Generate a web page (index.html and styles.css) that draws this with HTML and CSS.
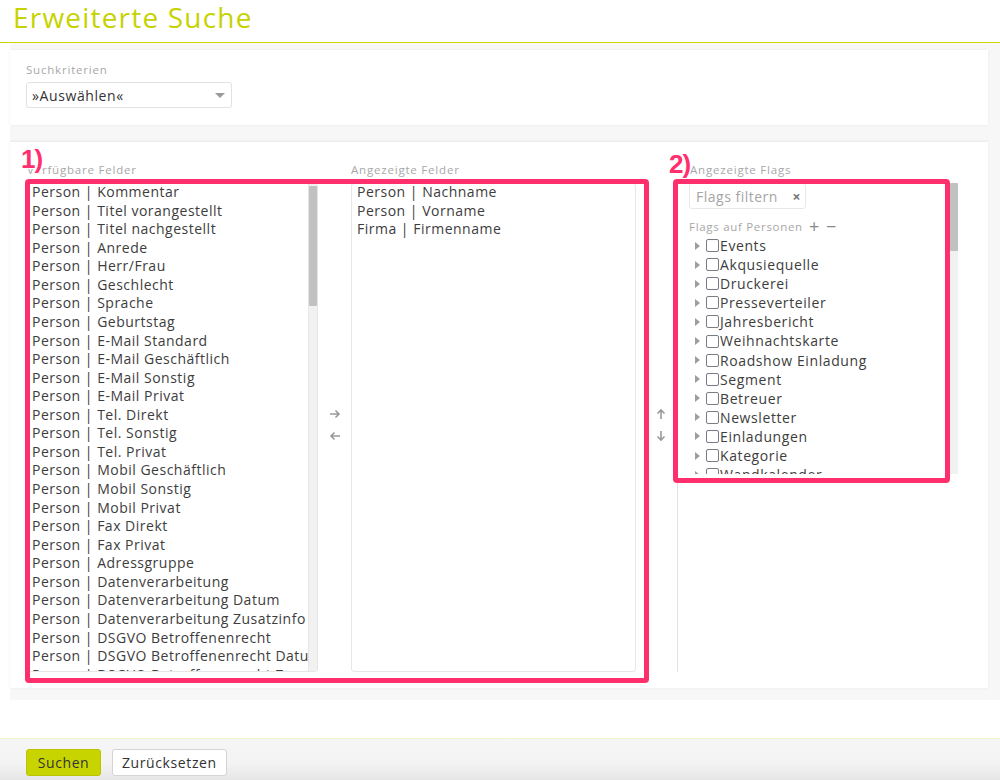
FILE: index.html
```html
<!DOCTYPE html>
<html>
<head>
  <meta charset="UTF-8">
  <meta name="viewport" content="width=device-width, initial-scale=1.0">
  <title>Erweiterte Suche</title>
  <link rel="stylesheet" href="styles.css">
</head>
<body>
  <header class="page-head">
    <h1 class="page-title">Erweiterte Suche</h1>
  </header>

  <main class="content">
    <section class="card criteria">
      <div class="field-label">Suchkriterien</div>
      <div class="select">
        <span>»Auswählen«</span>
        <span class="caret"></span>
      </div>
    </section>

    <section class="card fields">
      <div class="col col-available">
        <div class="field-label">Verfügbare Felder</div>
        <div class="listbox">
          <ul class="list">
            <li>Person | Kommentar</li>
            <li>Person | Titel vorangestellt</li>
            <li>Person | Titel nachgestellt</li>
            <li>Person | Anrede</li>
            <li>Person | Herr/Frau</li>
            <li>Person | Geschlecht</li>
            <li>Person | Sprache</li>
            <li>Person | Geburtstag</li>
            <li>Person | E-Mail Standard</li>
            <li>Person | E-Mail Geschäftlich</li>
            <li>Person | E-Mail Sonstig</li>
            <li>Person | E-Mail Privat</li>
            <li>Person | Tel. Direkt</li>
            <li>Person | Tel. Sonstig</li>
            <li>Person | Tel. Privat</li>
            <li>Person | Mobil Geschäftlich</li>
            <li>Person | Mobil Sonstig</li>
            <li>Person | Mobil Privat</li>
            <li>Person | Fax Direkt</li>
            <li>Person | Fax Privat</li>
            <li>Person | Adressgruppe</li>
            <li>Person | Datenverarbeitung</li>
            <li>Person | Datenverarbeitung Datum</li>
            <li>Person | Datenverarbeitung Zusatzinfo</li>
            <li>Person | DSGVO Betroffenenrecht</li>
            <li>Person | DSGVO Betroffenenrecht Datum</li>
            <li>Person | DSGVO Betroffenenrecht Zusatz</li>
          </ul>
          <div class="scrollbar"><div class="thumb thumb-list"></div></div>
        </div>
      </div>

      <div class="mover">
        <svg width="12" height="10" viewBox="0 0 12 10"><path d="M1 5h9M6.5 1.5 10 5l-3.5 3.5" fill="none" stroke="#9a9a9a" stroke-width="1.6"/></svg>
        <svg width="12" height="10" viewBox="0 0 12 10"><path d="M11 5H2M5.5 1.5 2 5l3.5 3.5" fill="none" stroke="#9a9a9a" stroke-width="1.6"/></svg>
      </div>

      <div class="col col-shown">
        <div class="field-label">Angezeigte Felder</div>
        <div class="listbox shown-box">
          <ul class="list">
            <li>Person | Nachname</li>
            <li>Person | Vorname</li>
            <li>Firma | Firmenname</li>
          </ul>
        </div>
      </div>

      <div class="mover mover-order">
        <svg width="10" height="12" viewBox="0 0 10 12"><path d="M5 11V2M1.5 5.5 5 2l3.5 3.5" fill="none" stroke="#9a9a9a" stroke-width="1.6"/></svg>
        <svg width="10" height="12" viewBox="0 0 10 12"><path d="M5 1v9M1.5 6.5 5 10l3.5-3.5" fill="none" stroke="#9a9a9a" stroke-width="1.6"/></svg>
      </div>

      <div class="col col-flags">
        <div class="field-label flags-label">Angezeigte Flags</div>
        <div class="flags-frame">
          <div class="flags-box">
            <div class="flags-inner">
              <div class="filter">
                <span>Flags filtern</span>
                <span class="clear">×</span>
              </div>
              <div class="tree-head">
                <span>Flags auf Personen</span>
                <span class="tree-tool">+</span>
                <span class="tree-tool">−</span>
              </div>
              <ul class="tree">
                <li><span class="toggle"></span><span class="check"></span>Events</li>
                <li><span class="toggle"></span><span class="check"></span>Akqusiequelle</li>
                <li><span class="toggle"></span><span class="check"></span>Druckerei</li>
                <li><span class="toggle"></span><span class="check"></span>Presseverteiler</li>
                <li><span class="toggle"></span><span class="check"></span>Jahresbericht</li>
                <li><span class="toggle"></span><span class="check"></span>Weihnachtskarte</li>
                <li><span class="toggle"></span><span class="check"></span>Roadshow Einladung</li>
                <li><span class="toggle"></span><span class="check"></span>Segment</li>
                <li><span class="toggle"></span><span class="check"></span>Betreuer</li>
                <li><span class="toggle"></span><span class="check"></span>Newsletter</li>
                <li><span class="toggle"></span><span class="check"></span>Einladungen</li>
                <li><span class="toggle"></span><span class="check"></span>Kategorie</li>
                <li><span class="toggle"></span><span class="check"></span>Wandkalender</li>
              </ul>
            </div>
            <div class="scrollbar"><div class="thumb thumb-flags"></div></div>
          </div>
        </div>
      </div>
    </section>
  </main>

  <div class="spacer"></div>

  <footer class="actions">
    <button class="btn btn-primary">Suchen</button>
    <button class="btn">Zurücksetzen</button>
  </footer>

  <!-- annotations drawn on top of the screenshot -->
  <div class="mark mark-1"></div>
  <div class="mark-num num-1">1)</div>
  <div class="mark mark-2"></div>
  <div class="mark-num num-2">2)</div>
</body>
</html>
```

FILE: styles.css
```css
body {
  margin: 0;
  font-family: "Open Sans", Arial, sans-serif;
  color: #3a3a3a;
  background-color: #ffffff;
  position: relative;
  height: 780px;
  overflow: hidden;
}

ul {
  list-style: none;
  margin: 0;
  padding: 0;
}

.page-head {
  height: 42px;
  border-bottom: 1px solid #cad800;
}

.page-title {
  margin: 0;
  padding: 0 0 0 13px;
  font-size: 28px;
  line-height: 34px;
  font-weight: 400;
  letter-spacing: 1.2px;
  color: #c6d300;
}

.content {
  margin-left: 10px;
  padding: 7px 12px 12px 0;
  background-color: #f7f7f7;
}

.card {
  background-color: #ffffff;
  box-shadow: 0 0 3px rgba(0, 0, 0, 0.06);
}

.criteria {
  height: 75px;
  box-sizing: border-box;
  padding: 13px 0 0 16px;
}

.field-label {
  font-size: 11.5px;
  line-height: 14px;
  color: #a8a8a8;
  letter-spacing: 0.8px;
}

.select {
  margin-top: 5px;
  width: 206px;
  height: 26px;
  box-sizing: border-box;
  border: 1px solid #e2e2e2;
  border-radius: 3px;
  display: flex;
  align-items: center;
  justify-content: space-between;
  padding: 0 6px 0 5px;
  font-size: 14px;
  letter-spacing: 0.6px;
  color: #333;
}

.caret {
  width: 0;
  height: 0;
  border-left: 5px solid transparent;
  border-right: 5px solid transparent;
  border-top: 5px solid #9a9a9a;
}

.fields {
  margin-top: 16px;
  height: 547px;
  box-sizing: border-box;
  padding: 21px 0 16px 17px;
  display: flex;
  border-top: 1px solid #ececec;
}

.col {
  display: flex;
  flex-direction: column;
}

.col .field-label {
  margin-bottom: 6px;
}

.col-available {
  width: 291px;
}

.col-shown {
  width: 285px;
}

.col-flags {
  width: 281px;
}

.listbox {
  flex: 1;
  display: flex;
  overflow: hidden;
  border: 1px solid #e6e6e6;
  border-radius: 3px;
}

.list {
  flex: 1;
  overflow: hidden;
  padding: 0 0 0 4px;
  font-size: 14px;
  line-height: 18.56px;
  letter-spacing: 0.5px;
  color: #3d3d3d;
  white-space: nowrap;
  margin-top: -1px;
}

.shown-box .list {
  padding-left: 5px;
}

.scrollbar {
  width: 8px;
  background-color: #f1f1f1;
  border-left: 1px solid #e6e6e6;
}

.thumb {
  background-color: #c1c1c1;
  border-radius: 1px;
}

.thumb-list {
  margin-top: 2px;
  height: 120px;
}

.thumb-flags {
  height: 68px;
}

.mover {
  width: 33px;
  margin-top: 20px;
  padding-bottom: 6px;
  display: flex;
  flex-direction: column;
  align-items: center;
  justify-content: center;
  gap: 12px;
}

.mover-order {
  width: 41px;
  padding-left: 9px;
  box-sizing: border-box;
  gap: 10px;
}

.flags-label {
  padding-left: 13px;
}

.flags-frame {
  flex: 1;
  border-left: 1px solid #e3e3e3;
}

.flags-box {
  height: 291px;
  display: flex;
}

.flags-inner {
  flex: 1;
  padding-left: 11px;
  overflow: hidden;
}

.filter {
  width: 117px;
  height: 26px;
  box-sizing: border-box;
  border: 1px solid #e8e8e8;
  border-radius: 3px;
  display: flex;
  align-items: center;
  justify-content: space-between;
  padding: 0 4px 0 6px;
  font-size: 14px;
  letter-spacing: 0.5px;
  color: #a5a5a5;
}

.clear {
  font-size: 14px;
  font-weight: 700;
  color: #777;
}

.tree-head {
  margin-top: 10px;
  height: 14px;
  display: flex;
  align-items: center;
  font-size: 11.5px;
  letter-spacing: 0.7px;
  color: #a8a8a8;
}

.tree-tool {
  margin-left: 6px;
  font-size: 18px;
  color: #8a8a8a;
  line-height: 14px;
}

.tree {
  margin-top: 3px;
  font-size: 14px;
  line-height: 19.1px;
  letter-spacing: 0.6px;
  color: #3d3d3d;
  white-space: nowrap;
}

.tree li {
  display: flex;
  align-items: center;
}

.toggle {
  width: 0;
  height: 0;
  margin: 0 6px 0 6px;
  border-top: 4px solid transparent;
  border-bottom: 4px solid transparent;
  border-left: 5px solid #9d9d9d;
}

.check {
  width: 11px;
  height: 11px;
  border: 1.5px solid #7b7b86;
  border-radius: 2px;
  margin-right: 1px;
}

.spacer {
  height: 38px;
}

.actions {
  height: 42px;
  box-sizing: border-box;
  border-top: 1px solid #eef3c8;
  background: linear-gradient(#f6f6f6, #f3f3f3 60%, #e6e6e6);
  padding: 10px 0 0 26px;
  display: flex;
  gap: 11px;
  align-items: flex-start;
}

.btn {
  height: 27px;
  padding: 0 9px;
  font-family: "Open Sans", Arial, sans-serif;
  font-size: 14px;
  letter-spacing: 0.6px;
  color: #333;
  background-color: #ffffff;
  border: 1px solid #d4d4d4;
  border-radius: 3px;
}

.btn-primary {
  width: 75px;
  background-color: #c8d400;
  border-color: #b8c400;
}

.mark {
  position: absolute;
  border: 5px solid #ff2f6d;
  border-radius: 4px;
}

.mark-1 {
  left: 25px;
  top: 179px;
  width: 614px;
  height: 494px;
}

.mark-2 {
  left: 673px;
  top: 179px;
  width: 267px;
  height: 294px;
}

.mark-num {
  position: absolute;
  font-family: "Liberation Sans", Arial, sans-serif;
  font-weight: 700;
  font-size: 26px;
  line-height: 28px;
  letter-spacing: -1px;
  color: #ff2f6d;
  text-shadow: 1px 0 0 #fff, -1px 0 0 #fff, 0 1px 0 #fff, 0 -1px 0 #fff, 1px 1px 0 #fff, -1px -1px 0 #fff, 1px -1px 0 #fff, -1px 1px 0 #fff;
}

.num-1 {
  left: 21px;
  top: 145px;
}

.num-2 {
  left: 669px;
  top: 150px;
}
```
